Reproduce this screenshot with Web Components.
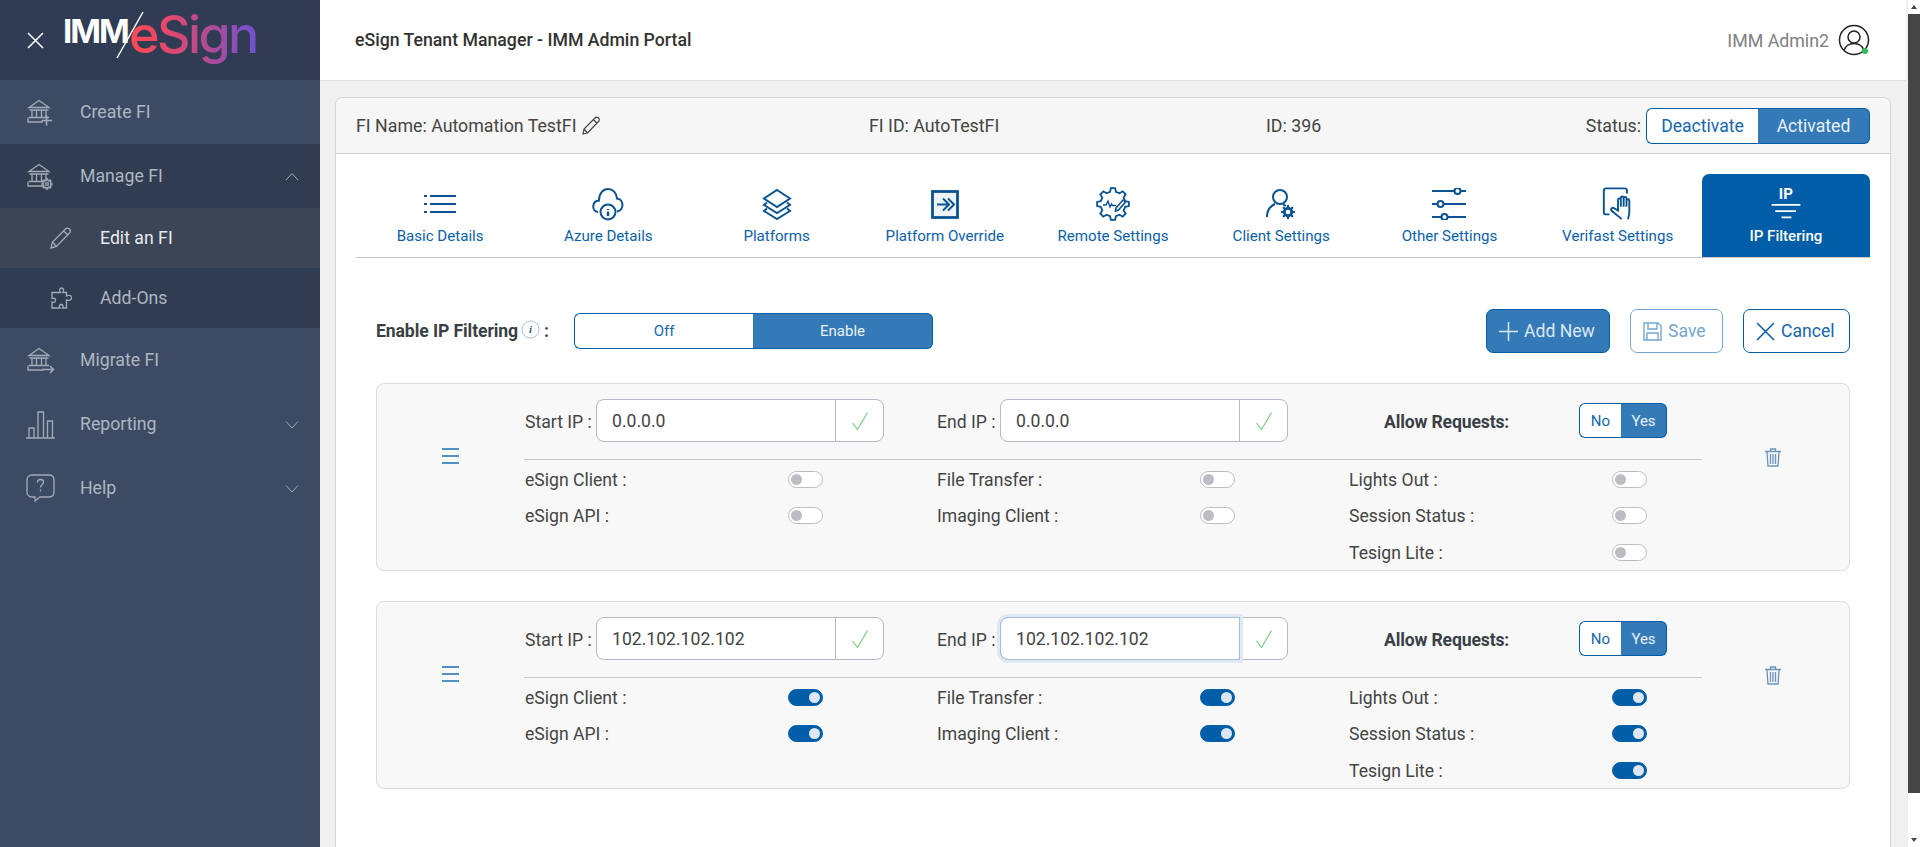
<!DOCTYPE html>
<html lang="en">
<head>
<meta charset="UTF-8">
<title>eSign Tenant Manager - IMM Admin Portal</title>
<style>
	html, body { margin: 0; height: 100%; overflow: hidden; }
	body { font-family: Roboto, "Liberation Sans", sans-serif; color: #444; background: #f0f0f1; }
	app-shell { height: 847px; }
</style>
</head>
<body>
<app-shell>
	<side-bar slot="side">
		<nav-item label="Create FI" icon="bankPlus" tone="light"></nav-item>
		<nav-item label="Manage FI" icon="bankGear" tone="dark" chevron="up"></nav-item>
		<nav-item label="Edit an FI" icon="pencil" tone="active" sub></nav-item>
		<nav-item label="Add-Ons" icon="puzzle" tone="dark" sub></nav-item>
		<nav-item label="Migrate FI" icon="bankArrow" tone="light"></nav-item>
		<nav-item label="Reporting" icon="bars" tone="light" chevron="down"></nav-item>
		<nav-item label="Help" icon="help" tone="light" chevron="down"></nav-item>
	</side-bar>
	<top-bar slot="top"></top-bar>
	<fi-panel slot="main">
		<fi-summary></fi-summary>
		<tab-strip>
			<tab-item label="Basic Details" icon="list"></tab-item>
			<tab-item label="Azure Details" icon="cloud"></tab-item>
			<tab-item label="Platforms" icon="layers"></tab-item>
			<tab-item label="Platform Override" icon="override"></tab-item>
			<tab-item label="Remote Settings" icon="remote"></tab-item>
			<tab-item label="Client Settings" icon="client"></tab-item>
			<tab-item label="Other Settings" icon="sliders"></tab-item>
			<tab-item label="Verifast Settings" icon="hand"></tab-item>
			<tab-item label="IP Filtering" icon="ip" active></tab-item>
		</tab-strip>
		<filter-bar></filter-bar>
		<ip-card start="0.0.0.0" end="0.0.0.0"></ip-card>
		<ip-card start="102.102.102.102" end="102.102.102.102" on focused></ip-card>
	</fi-panel>
</app-shell>

<script>
const sideStroke = 'fill="none" stroke="#a3abb8" stroke-width="1.3"';
const tabStroke = 'fill="none" stroke="#0b5390" stroke-width="2"';
const bankBase = '<path d="M3 9.500 13 2.500l10 7zM3.500 12h19M6 12v7.500M10.500 12v7.500M15.500 12v7.500M20 12v7.500M3 19.500h20M2 19.500v4.500h15"/>';

// toothed outline for the gear icons
function gear(cx, cy, rOut, rIn, teeth) {
	const pts = [];
	const step = Math.PI * 2 / teeth;
	for (let i = 0; i < teeth; i++) {
		const a = i * step;
		[[-.3, rIn], [-.17, rOut], [.17, rOut], [.3, rIn]].forEach(([k, r]) => {
			pts.push((cx + r * Math.cos(a + k * step)).toFixed(1) + ' ' + (cy + r * Math.sin(a + k * step)).toFixed(1));
		});
	}
	return 'M' + pts.join('L') + 'z';
}

const icons = {
	bankPlus: `<svg width="27" height="28" viewBox="0 0 27 28" ${sideStroke}>${bankBase}<path stroke-width="1.6" d="M20.500 17.500v10M15.500 22.500h10.500"/></svg>`,
	bankGear: `<svg width="27" height="28" viewBox="0 0 27 28" ${sideStroke}>${bankBase}<path d="${gear(21, 22, 5, 3.6, 8)}" fill="#303c50"/><circle cx="21" cy="22" r="1.400"/></svg>`,
	bankArrow: `<svg width="29" height="28" viewBox="0 0 29 28" ${sideStroke}>${bankBase}<path stroke-width="1.500" d="M16 23.500h11.500M24 20l3.500 3.500-3.500 3.500"/></svg>`,
	pencil: `<svg width="22" height="22" viewBox="0 0 22 22" ${sideStroke}><path d="M1 21l1.500-6L15.500 2c1.200-1.200 3-1.200 4 0s1.200 2.800 0 4L6.500 19.500zM2.500 15l4 4.500M13.500 4l4.500 4"/></svg>`,
	puzzle: `<svg width="23" height="23" viewBox="0 0 23 23" ${sideStroke}><path d="M8 5.500h2.500C9 3 9.500 1 11.500 1s2.800 2 1.300 4.500H16.500v3.500c2.500-1.200 5-.8 5 1.800s-2.500 3.200-5 2V21h-4c1-2 .5-3.500-1.300-3.500S9 19 10 21H2v-6c2 1 3.500 .2 3.500-1.700S4 10.500 2 11.500V5.500z"/></svg>`,
	bars: `<svg width="29" height="29" viewBox="0 0 29 29" ${sideStroke}><path d="M0 28h29M3 28V18h5v10M12 28V2h5.500v26M21.500 28V11H26.500v17"/></svg>`,
	help: `<svg width="29" height="28" viewBox="0 0 29 28" ${sideStroke}><path d="M6 1h17c3 0 5 2 5 5v12c0 3-2 5-5 5H14l-5 4v-4H6c-3 0-5-2-5-5V6c0-3 2-5 5-5z"/><path d="M11.500 8.500c0-2 1.300-3 3-3s3 1 3 2.800c0 2.500-3 2.500-3 5.200M14.500 15.500v2"/></svg>`,
	close: `<svg width="17" height="17" viewBox="0 0 17 17" fill="none" stroke="#fff" stroke-width="1.500"><path d="M1 1l15 15M16 1L1 16"/></svg>`,
	list: `<svg width="32" height="20" viewBox="0 0 32 20" ${tabStroke}><path d="M0 2h3M6 2h26M0 10h3M6 10h26M0 18h3M6 18h26"/></svg>`,
	cloud: `<svg width="32" height="34" viewBox="0 0 32 34" ${tabStroke}><path d="M6 25c-7-1-6-11 1-11.500C7 6 11.500 2 16 2c5 0 8.500 4 9 9.500 7 .5 7.500 11.500 0 13"/><circle cx="16" cy="25" r="7.500"/><path d="M16 22v1M16 24.500V29" stroke-width="2.400"/></svg>`,
	layers: `<svg width="30" height="32" viewBox="0 0 30 32" ${tabStroke} stroke-width="2.200"><path d="M15 2 28 10.500 15 19 2 10.500zM5 14.500 2 17l13 8 13-8-3-2.500M5 20.500 2 23l13 8 13-8-3-2.500"/></svg>`,
	override: `<svg width="28" height="30" viewBox="0 0 28 30" ${tabStroke}><rect x="1.500" y="2.500" width="25" height="26" stroke-width="2.800" fill="#eef3f8"/><path d="M6 15.500h11M12 9.500l6 6-6 6M17 9.500l6 6-6 6"/></svg>`,
	remote: `<svg width="34" height="34" viewBox="0 0 34 34" ${tabStroke}><path d="${gear(17, 17, 16, 12.500, 8)}" stroke-width="1.800"/><path d="M7 18h3l2-4 2 6 1.500-3 1 1.500H20" stroke-width="1.400"/><path d="M20 21l7-8 2.500 2-7 8-3 1z" fill="#fff" stroke-width="1.600"/></svg>`,
	client: `<svg width="30" height="32" viewBox="0 0 30 32" ${tabStroke}><circle cx="14" cy="9" r="7"/><path d="M1 29c0-7 3.500-11 8-13M17 16.500c1 .3 2 .8 2.800 1.500"/><path d="${gear(22, 24, 7, 5, 8)}" fill="#0b5390" stroke="none"/><circle cx="22" cy="24" r="2.300" fill="#fff" stroke="none"/></svg>`,
	sliders: `<svg width="34" height="32" viewBox="0 0 34 32" ${tabStroke}><path d="M0 3h22M29 3h5M0 16h5M12 16h22M0 29h9M16 29h18"/><circle cx="25.500" cy="3" r="3"/><circle cx="8.500" cy="16" r="3"/><circle cx="12.500" cy="29" r="3"/></svg>`,
	hand: `<svg width="32" height="36" viewBox="0 0 32 36" ${tabStroke}><path d="M7 29H3c-1.200 0-2-.8-2-2V4c0-1.500 1-2.500 2.500-2.500H23c1.500 0 2.500 1 2.500 2.500v3"/><path d="M20 34 9.500 25.500c-2-2 .5-4.500 2.500-3L16 25V13.500c0-2 3-2 3 0V21v-9.500c0-2 3-2 3 0V21v-9c0-2 3-2 3 0v9-6.500c0-2 3-2 3 0V26c0 3-.5 5-1.500 8"/></svg>`,
	ip: `<svg width="32" height="20" viewBox="0 0 32 20" fill="none" stroke="#fff" stroke-width="2"><path d="M0 2h32M4 9h23M11 16h11"/></svg>`,
	infoDot: `<svg width="19" height="19" viewBox="0 0 19 19" fill="none"><circle cx="9.500" cy="9.500" r="8.500" stroke="#a9bdd1"/></svg>`,
	edit: `<svg width="18" height="19" viewBox="0 0 18 19" fill="none" stroke="#444" stroke-width="1.200"><path d="M1 18l1-5L13 2c1-1 2.500-1 3.500 0s1 2.500 0 3.500L5.500 17zM2 13l3.500 4M11.500 3.500l3.500 4"/></svg>`,
	avatar: `<svg width="32" height="32" viewBox="0 0 32 32" fill="none" stroke="#222" stroke-width="1.500"><circle cx="16" cy="16" r="14.500"/><circle cx="16" cy="13" r="6"/><path d="M6 26.500c1.500-4.500 5-7 10-7s8.500 2.500 10 7"/><circle cx="27" cy="27" r="3" fill="#2dbb5d" stroke="none"/></svg>`,
	plus: `<svg width="19" height="19" viewBox="0 0 19 19" fill="none" stroke="#dce8f3" stroke-width="1.500"><path d="M9.500 0v19M0 9.500h19"/></svg>`,
	save: `<svg width="19" height="19" viewBox="0 0 19 19" fill="none" stroke="#76a6cf" stroke-width="1.400"><path d="M1 1h14l3 3v14H1zM5 1v6h9V1M4 18v-7h11v7"/></svg>`,
	cancel: `<svg width="19" height="19" viewBox="0 0 19 19" fill="none" stroke="#005ea8" stroke-width="1.500"><path d="M1 1l17 17M18 1 1 18"/></svg>`,
	grip: `<svg width="17" height="16" viewBox="0 0 17 16" fill="none" stroke="#1a6db0" stroke-width="1.500"><path d="M0 1h17M0 8h17M0 15h17"/></svg>`,
	trash: `<svg width="16" height="19" viewBox="0 0 16 19" fill="none" stroke="#6b94b8" stroke-width="1.300"><path d="M0 3.500h16M5.500 3V1h5v2M2 4l1 14h10l1-14M5.500 6v10M8 6v10M10.500 6v10"/></svg>`,
	check: `<svg width="16" height="18" viewBox="0 0 16 18" fill="none" stroke-width="1.100"><path stroke="#74c97c" d="M.5 11l5 6.500L15.500 .5"/></svg>`
};

function define(name, css, render) {
	customElements.define(name, class extends HTMLElement {
		connectedCallback() {
			if (this.shadowRoot) return;
			this.attachShadow({mode: 'open'}).innerHTML = `<style>${css}</style>${render(this)}`;
		}
	});
}

define('app-shell', `
	:host { display: flex; }
	.side { width: 320px; flex: none; }
	.right { width: 1588px; flex: none; display: flex; flex-direction: column; height: 847px; }
	.main { flex: 1; display: flex; padding: 16px 17px 0 15px; min-height: 0; }
	.scroll { width: 12px; flex: none; background: #fff; display: flex; flex-direction: column; align-items: center; }
	.arrow { height: 14px; flex: none; display: flex; justify-content: center; align-items: center; }
	.arrow i { border: 3px solid transparent; }
	.up i { border-bottom: 4px solid #454545; border-top: 0; }
	.down i { border-top: 4px solid #454545; border-bottom: 0; }
	.thumb { height: 779px; width: 100%; background: #454545; flex: none; }
	.gap { flex: 1; }
`, () => `
	<div class="side"><slot name="side"></slot></div>
	<div class="right"><slot name="top"></slot><div class="main"><slot name="main"></slot></div></div>
	<div class="scroll"><div class="arrow up"><i></i></div><div class="thumb"></div><div class="gap"></div><div class="arrow down"><i></i></div></div>
`);

define('side-bar', `
	:host { display: block; height: 847px; background: #3c4b63; }
	.head { height: 80px; background: #2f3c53; display: flex; align-items: center; padding-left: 27px; box-sizing: border-box; position: relative; }
	.logo { margin-left: 20px; display: flex; align-items: baseline; position: relative; height: 80px; }
	.imm { font: 700 33px Inter, sans-serif; color: #fff; position: absolute; left: -1px; top: 11px; letter-spacing: -2px; line-height: 40px; }
	.slash { position: absolute; left: 51px; top: 10px; }
	.esign { position: absolute; left: 65px; top: 0; font: 500 52px/70px Inter, sans-serif; letter-spacing: -2.600px; white-space: nowrap;
		background: linear-gradient(90deg, #ff4a52 0%, #e8476a 28%, #b04c93 62%, #6f51d0 100%); -webkit-background-clip: text; background-clip: text; color: transparent; }
`, () => `
	<div class="head">${icons.close}
		<div class="logo"><span class="imm">IMM</span>
			<svg class="slash" width="30" height="50" viewBox="0 0 30 50" fill="none" stroke="#fff" stroke-width="1.500"><path d="M28 2 2 48"/></svg>
			<span class="esign">eSign</span></div>
	</div>
	<slot></slot>
`);

define('nav-item', `
	:host { display: flex; align-items: center; height: 64px; font-size: 17.700px; color: #aeb6c2; position: relative; }
	:host([sub]) { height: 60px; }
	:host([tone=light]) { background: #3c4b63; }
	:host([tone=dark]) { background: #303c50; }
	:host([tone=active]) { background: #3b4556; color: #e6eaef; }
	.ic { width: 80px; flex: none; padding-left: 26px; box-sizing: border-box; display: flex; }
	:host([sub]) .ic { width: 100px; padding-left: 50px; }
	.lb { flex: 1; }
	.ch { margin-right: 21px; display: flex; }
`, el => {
	const chev = el.getAttribute('chevron');
	const d = chev === 'up' ? 'M1 8 7 1.500 13 8' : 'M1 1.500 7 8 13 1.500';
	return `<span class="ic">${icons[el.getAttribute('icon')]}</span><span class="lb">${el.getAttribute('label')}</span>` +
		(chev ? `<span class="ch"><svg width="14" height="9" viewBox="0 0 14 9" fill="none" stroke="#a3abb8"><path d="${d}"/></svg></span>` : '');
});

define('top-bar', `
	:host { display: flex; align-items: center; justify-content: space-between; height: 81px; box-sizing: border-box; background: #fff; border-bottom: 1px solid #dde1e6; padding: 0 36px 0 35px; width: 1586px; flex: none; }
	.title { font-weight: 500; font-size: 17.700px; color: #333; }
	.user { display: flex; align-items: center; gap: 9px; color: #808080; font-size: 17.800px; }
	svg { display: block; }
`, () => `<span class="title">eSign Tenant Manager - IMM Admin Portal</span><span class="user">IMM Admin2 ${icons.avatar}</span>`);

define('fi-panel', `
	:host { display: block; width: 1556px; background: #fff; border: 1px solid #d4d6d9; border-bottom: 0; border-radius: 7px 7px 0 0; box-sizing: border-box; }
`, () => `<slot></slot>`);

define('fi-summary', `
	:host { display: flex; align-items: center; height: 56px; box-sizing: border-box; background: #f6f6f6; border-bottom: 1px solid #d0d0d0; border-radius: 7px 7px 0 0; font-size: 17.800px; color: #444; padding: 0 20px 0 20px; position: relative; }
	.name { width: 513px; display: flex; align-items: center; gap: 5px; }
	.fid { width: 397px; }
	.num { flex: 1; }
	.status { display: flex; align-items: center; gap: 5px; }
	svg { display: block; }
`, () => `
	<span class="name">FI Name: Automation TestFI ${icons.edit}</span>
	<span class="fid">FI ID: AutoTestFI</span>
	<span class="num">ID: 396</span>
	<span class="status"><span>Status:</span><seg-toggle left="Deactivate" right="Activated" w1="112" w2="112" h="36" fs="17.600"></seg-toggle></span>
`);

define('seg-toggle', `
	:host { display: inline-flex; font-weight: 400; letter-spacing: 0; }
	div { display: flex; align-items: center; justify-content: center; box-sizing: border-box; border: 1px solid #005ea8; }
	.l { background: #fff; color: #1567ab; border-radius: 6px 0 0 6px; border-right: 0; }
	.r { background: #337ab7; color: #eaf1f8; border-radius: 0 6px 6px 0; border-left: 0; }
`, el => {
	const h = el.getAttribute('h'), fs = el.getAttribute('fs');
	return `<div class="l" style="width:${el.getAttribute('w1')}px;height:${h}px;font-size:${fs}px">${el.getAttribute('left')}</div>` +
		`<div class="r" style="width:${el.getAttribute('w2')}px;height:${h}px;font-size:${fs}px">${el.getAttribute('right')}</div>`;
});

define('tab-strip', `
	:host { display: grid; grid-template-columns: repeat(9, 1fr); margin: 20px 20px 0; height: 84px; box-sizing: border-box; border-bottom: 1px solid #c8c8c8; }
`, () => `<slot></slot>`);

define('tab-item', `
	:host { display: flex; flex-direction: column; align-items: center; color: #0b61a8; font-size: 15.100px; height: 83px; box-sizing: border-box; padding-top: 13px; }
	:host([active]) { background: #005ea8; color: #fff; border-radius: 7px 7px 0 0; font-weight: 500; }
	.ic { height: 38px; display: flex; flex-direction: column; align-items: center; justify-content: center; flex: none; padding-bottom: 4px; box-sizing: border-box; }
	.ip { font-weight: 700; font-size: 15px; line-height: 14px; margin-bottom: 2px; }
	.lb { line-height: 20px; margin-top: 1px; }
	svg { display: block; }
`, el => {
	const icon = el.getAttribute('icon');
	const top = icon === 'ip' ? '<span class="ip">IP</span>' : '';
	return `<div class="ic">${top}${icons[icon]}</div><div class="lb">${el.getAttribute('label')}</div>`;
});

define('filter-bar', `
	:host { display: flex; align-items: center; margin: 51px 40px 0 40px; height: 44px; }
	.lb { font-weight: 700; font-size: 17.600px; color: #3a3f46; display: flex; align-items: center; width: 198px; flex: none; white-space: nowrap; letter-spacing: -.1px; }
	.info { position: relative; display: flex; margin: -4px 4px 0 3px; }
	.info b { position: absolute; inset: 0; text-align: center; font: italic 700 11px/19px "Liberation Serif", serif; color: #3a5a78; }
	.acts { margin-left: auto; display: flex; gap: 20px; }
`, () => `
	<span class="lb">Enable IP Filtering<span class="info">${icons.infoDot}<b>i</b></span>:</span>
	<seg-toggle left="Off" right="Enable" w1="179" w2="180" h="36" fs="15"></seg-toggle>
	<div class="acts">
		<act-button kind="fill" icon="plus">Add New</act-button>
		<act-button kind="off" icon="save">Save</act-button>
		<act-button kind="line" icon="cancel">Cancel</act-button>
	</div>
`);

define('act-button', `
	:host { display: inline-flex; align-items: center; gap: 6px; height: 44px; box-sizing: border-box; border: 1px solid #005ea8; border-radius: 7px; padding: 0 12px; font-size: 17.600px; }
	:host([kind=fill]) { background: #337ab7; color: #dce8f3; width: 124px; }
	:host([kind=off]) { background: #fff; color: #76a6cf; border-color: #76a6cf; width: 93px; }
	:host([kind=line]) { background: #fff; color: #1567ab; width: 107px; }
	svg { display: block; }
`, el => `${icons[el.getAttribute('icon')]}<slot></slot>`);

define('ip-card', `
	:host { display: flex; margin: 30px 40px 0 40px; height: 188px; box-sizing: border-box; background: #f8f8f8; border: 1px solid #dcdcdc; border-radius: 8px; }
	.side { width: 147px; flex: none; display: flex; align-items: flex-start; justify-content: center; padding-top: 64px; box-sizing: border-box; }
	.trash svg { margin-left: -6px; }
	.mid { width: 1178px; flex: none; }
	.top { display: flex; height: 76px; box-sizing: border-box; padding-top: 15px; border-bottom: 1px solid #c8c8c8; }
	.allow { padding: 2px 0 0 36px; display: flex; align-items: center; height: 43px; font-weight: 700; font-size: 17.600px; color: #3a3f46; width: 354px; flex: none; box-sizing: border-box; letter-spacing: -.15px; }
	.allow span { width: 195px; flex: none; }
	.allow seg-toggle { margin-top: -2px; }
	.rows { display: flex; padding-top: 1px; }
	.col { width: 412px; flex: none; }
	.col:last-child { width: 354px; }
	svg { display: block; }
`, el => {
	const on = el.hasAttribute('on') ? 'on' : '';
	const focused = el.hasAttribute('focused') ? 'focused' : '';
	const row = t => `<switch-row label="${t}" ${on}></switch-row>`;
	return `
	<div class="side">${icons.grip}</div>
	<div class="mid">
		<div class="top">
			<ip-field label="Start IP :" value="${el.getAttribute('start')}" lw="71"></ip-field>
			<ip-field label="End IP :" value="${el.getAttribute('end')}" lw="63" ${focused}></ip-field>
			<div class="allow"><span>Allow Requests:</span><seg-toggle left="No" right="Yes" w1="42" w2="46" h="35" fs="15"></seg-toggle></div>
		</div>
		<div class="rows">
			<div class="col">${row('eSign Client :')}${row('eSign API :')}</div>
			<div class="col">${row('File Transfer :')}${row('Imaging Client :')}</div>
			<div class="col">${row('Lights Out :')}${row('Session Status :')}${row('Tesign Lite :')}</div>
		</div>
	</div>
	<div class="side trash">${icons.trash}</div>`;
});

define('ip-field', `
	:host { display: flex; align-items: center; width: 412px; height: 43px; font-size: 17.600px; color: #444; flex: none; padding-left: 1px; box-sizing: border-box; }
	.lb { flex: none; white-space: nowrap; padding-top: 2px; box-sizing: border-box; }
	.box { width: 288px; height: 43px; box-sizing: border-box; display: flex; background: #fff; border: 1px solid #b5b7c2; border-radius: 8px; }
	.val { flex: 1; display: flex; align-items: center; padding: 1px 0 0 15px; border-right: 1px solid #b5b7c2; color: #444; }
	:host([focused]) .val { border-radius: 8px 0 0 8px; box-shadow: 0 0 0 3px #dfe8f3; border: 1px solid #a8bfd8; margin: -1px 0 -1px -1px; }
	.ok { width: 47px; flex: none; display: flex; align-items: center; justify-content: center; }
`, el => `<span class="lb" style="width:${el.getAttribute('lw')}px">${el.getAttribute('label')}</span>
	<div class="box"><div class="val">${el.getAttribute('value')}</div><div class="ok">${icons.check}</div></div>`);

define('switch-row', `
	:host { display: flex; align-items: center; height: 36.500px; font-size: 17.600px; color: #444; padding-left: 1px; }
	.lb { width: 263px; flex: none; padding-top: 1px; }
	.sw { width: 35px; height: 17px; box-sizing: border-box; border: 1px solid #bcbcbc; border-radius: 9px; background: #fff; position: relative; }
	.sw i { position: absolute; left: 2px; top: 2px; width: 11px; height: 11px; border-radius: 50%; background: #bdbcc2; }
	:host([on]) .sw { background: #005ea8; border-color: #005ea8; }
	:host([on]) .sw i { left: auto; right: 2px; background: #dce7f3; }
`, el => `<span class="lb">${el.getAttribute('label')}</span><span class="sw"><i></i></span>`);
</script>
</body>
</html>
